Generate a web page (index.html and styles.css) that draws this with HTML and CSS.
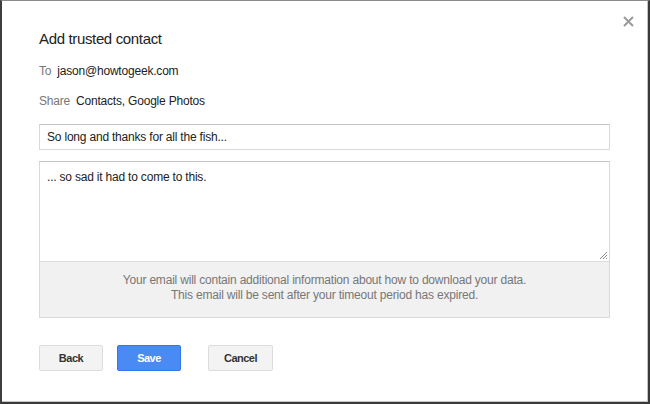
FILE: index.html
```html
<!DOCTYPE html>
<html>
<head>
<meta charset="utf-8">
<link rel="stylesheet" href="styles.css">
</head>
<body>
<div class="dialog">
  <button class="close" aria-label="Close">
    <svg width="11" height="11" viewBox="0 0 11 11"><path d="M1 1 L10 10 M10 1 L1 10" stroke="#9a9a9a" stroke-width="2" fill="none"/></svg>
  </button>
  <h1 class="title">Add trusted contact</h1>
  <div class="row row-to"><span class="label">To</span><span class="value">jason@howtogeek.com</span></div>
  <div class="row row-share"><span class="label">Share</span><span class="value">Contacts, Google Photos</span></div>
  <div class="input">So long and thanks for all the fish...</div>
  <div class="compose">
    <div class="body-text">
      ... so sad it had to come to this.
      <svg class="grip" width="9" height="9" viewBox="0 0 9 9"><path d="M8 1 L1 8 M8 4 L4 8 M8 7 L7 8" stroke="#8a8a8a" stroke-width="1" fill="none"/></svg>
    </div>
    <div class="info">
      <div>Your email will contain additional information about how to download your data.</div>
      <div>This email will be sent after your timeout period has expired.</div>
    </div>
  </div>
  <div class="actions">
    <button class="btn">Back</button>
    <button class="btn primary">Save</button>
    <button class="btn cancel">Cancel</button>
  </div>
</div>
</body>
</html>
```

FILE: styles.css
```css
html, body {
  margin: 0;
  padding: 0;
  background: #fff;
}
.dialog {
  position: relative;
  box-sizing: border-box;
  width: 650px;
  height: 404px;
  border-left: 2px solid #3e3e3e;
  border-top: 1px solid #8a8a8a;
  border-right: 2px solid #3a3a3a;
  border-bottom: 2px solid #3a3a3a;
  box-shadow: inset -1px -1px 0 #c4c4c4;
  padding: 28px 38px 0 37px;
  font-family: "Liberation Sans", Arial, sans-serif;
  color: #222;
  display: flex;
  flex-direction: column;
}
.close {
  position: absolute;
  top: 15px;
  right: 14px;
  border: 0;
  background: none;
  padding: 0;
  width: 11px;
  height: 11px;
  display: flex;
}
.title {
  margin: 0;
  font-size: 15px;
  letter-spacing: -0.35px;
  font-weight: normal;
  line-height: 20px;
  color: #222;
}
.row {
  font-size: 12px;
  letter-spacing: -0.2px;
  line-height: 20px;
  display: flex;
  gap: 6px;
}
.row-to { margin-top: 12px; }
.row-share { margin-top: 10px; }
.label { color: #777; }
.value { color: #222; }
.input {
  margin-top: 13px;
  height: 26px;
  box-sizing: border-box;
  border: 1px solid #d9d9d9;
  border-top-color: #c4c4c4;
  padding: 0 7px;
  font-size: 12px;
  letter-spacing: -0.2px;
  line-height: 24px;
  color: #222;
}
.compose {
  margin-top: 11px;
  border: 1px solid #d9d9d9;
  border-top-color: #c4c4c4;
  display: flex;
  flex-direction: column;
}
.body-text {
  position: relative;
  height: 100px;
  box-sizing: border-box;
  padding: 7px 7px;
  font-size: 12px;
  letter-spacing: -0.2px;
  line-height: 16px;
  color: #222;
  border-bottom: 1px solid #dcdcdc;
}
.grip {
  position: absolute;
  right: 1px;
  bottom: 1px;
}
.info {
  background: #f1f1f1;
  height: 55px;
  box-sizing: border-box;
  padding: 11px 0 0;
  text-align: center;
  font-size: 12px;
  letter-spacing: -0.2px;
  line-height: 15px;
  color: #777;
}
.actions {
  margin-top: 27px;
  display: flex;
  align-items: center;
}
.btn {
  box-sizing: border-box;
  width: 64px;
  height: 26px;
  border: 1px solid #dcdcdc;
  border-radius: 2px;
  background: #f3f3f3;
  color: #333;
  font-family: "Liberation Sans", Arial, sans-serif;
  font-size: 11px;
  letter-spacing: -0.5px;
  font-weight: bold;
  padding: 0;
}
.btn.primary {
  margin-left: 14px;
  background: #4a8af4;
  border-color: #3079ed;
  color: #fff;
}
.btn.cancel {
  margin-left: 27px;
  width: 65px;
}
```
